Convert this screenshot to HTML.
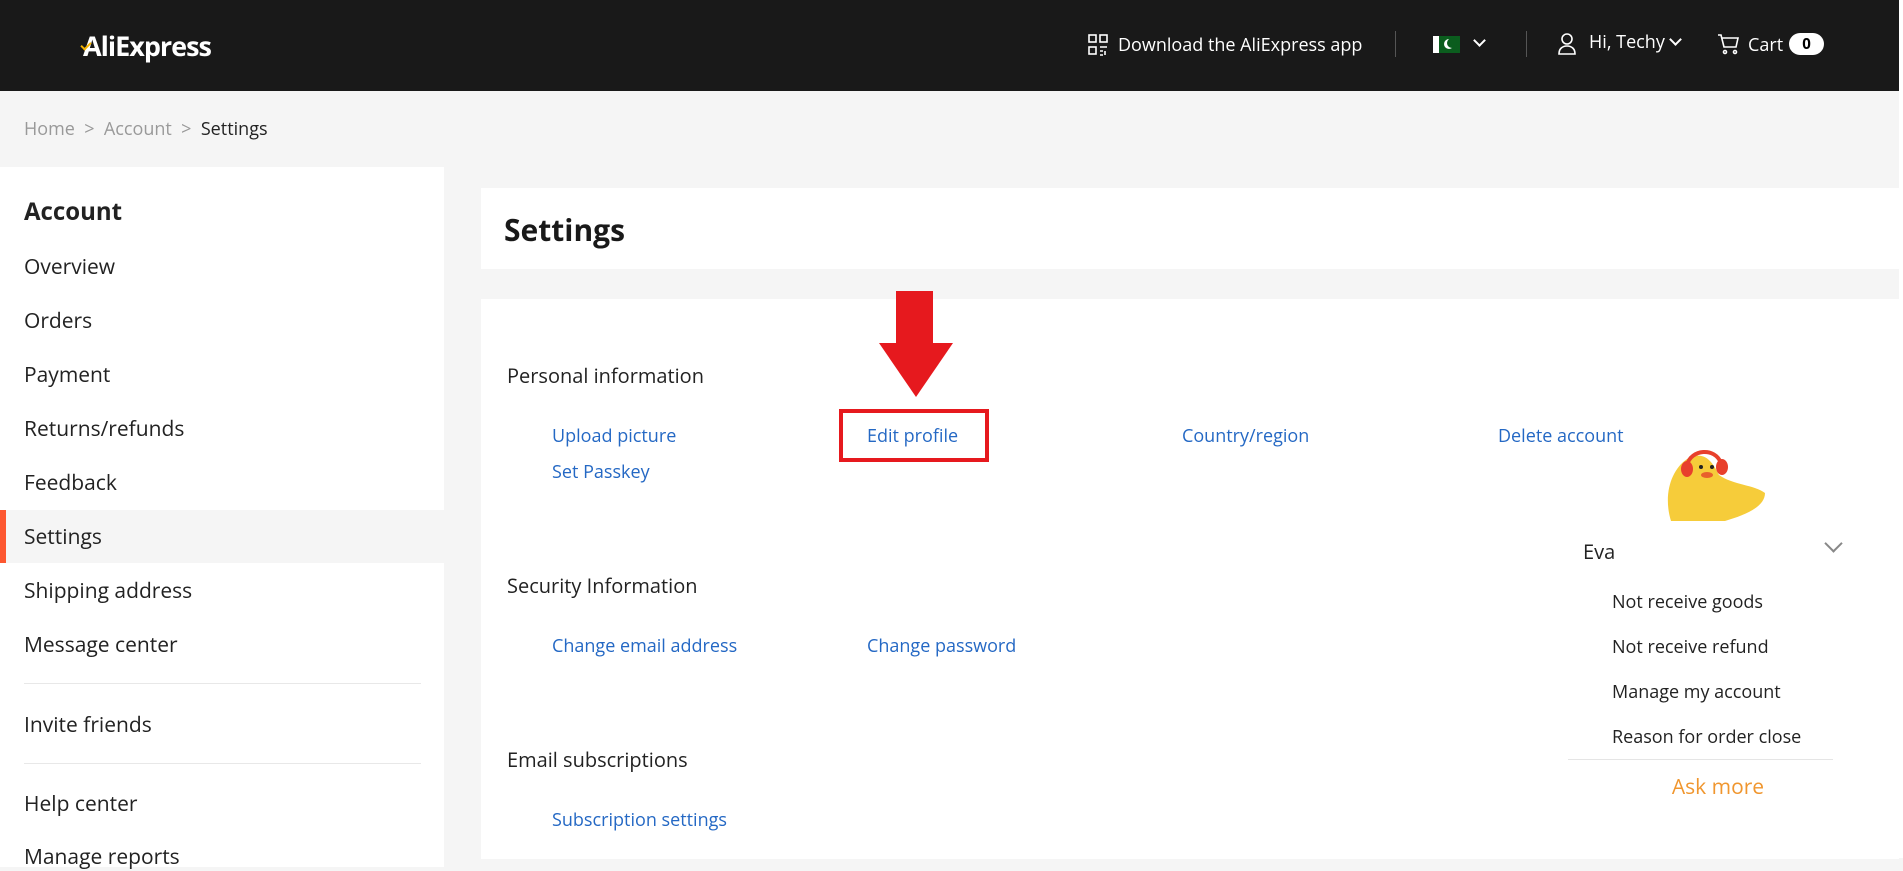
<!DOCTYPE html>
<html><head><meta charset="utf-8"><style>
*{margin:0;padding:0;box-sizing:border-box}
body{width:1903px;height:858px;overflow:hidden;background:#f5f5f5;font-family:"Open Sans","Liberation Sans",sans-serif;color:#222;position:relative}
.a{position:absolute;white-space:nowrap}
.hdr{position:absolute;left:0;top:0;width:1899px;height:91px;background:#191919;color:#fff}
.side{position:absolute;left:0;top:167px;width:444px;height:700px;background:#fff}
.si{position:absolute;left:24px;font-size:21px;color:#222;line-height:28px}
.lk{position:absolute;font-size:18px;color:#2468c4;line-height:24px;white-space:nowrap}
.sec{position:absolute;left:507px;font-size:20px;color:#222;line-height:26px;white-space:nowrap}
.ev{position:absolute;left:1612px;font-size:18px;color:#222;line-height:24px;white-space:nowrap}
</style></head><body>
<div class="hdr">
 <div class="a" style="left:83px;top:27px;font-size:27px;letter-spacing:-1px;font-weight:bold;color:#fff">AliExpress</div>
 <div class="a" style="left:81px;top:42px;width:10px;height:6px;border-left:2px solid #f5b301;border-bottom:2px solid #f5b301;transform:rotate(-45deg)"></div>
 <svg class="a" style="left:1088px;top:34px" width="20" height="22" viewBox="0 0 20 22" fill="none" stroke="#fff" stroke-width="1.6"><rect x="1" y="1" width="7" height="7"/><rect x="12" y="1" width="7" height="7"/><rect x="1" y="13" width="7" height="7"/><path d="M12 13h7M12 17h3M17 17v4M12 21h3"/></svg>
 <div class="a" style="left:1118px;top:33px;font-size:18px">Download the AliExpress app</div>
 <div class="a" style="left:1395px;top:31px;width:1px;height:26px;background:#555"></div>
 <div class="a" style="left:1433px;top:36px;width:6px;height:17px;background:#fff"></div>
 <div class="a" style="left:1439px;top:36px;width:21px;height:17px;background:#0b5d1e"></div>
 <div class="a" style="left:1444px;top:39px;width:10px;height:10px;border-radius:50%;background:#fff"></div>
 <div class="a" style="left:1447px;top:38px;width:10px;height:10px;border-radius:50%;background:#0b5d1e"></div>
 <div class="a" style="left:1475px;top:36px;width:9px;height:9px;border-right:2px solid #fff;border-bottom:2px solid #fff;transform:rotate(45deg)"></div>
 <div class="a" style="left:1526px;top:31px;width:1px;height:26px;background:#555"></div>
 <svg class="a" style="left:1558px;top:33px" width="18" height="22" viewBox="0 0 18 22" fill="none" stroke="#fff" stroke-width="1.6"><circle cx="9" cy="6" r="5"/><path d="M1 21c0-5 3-8 8-8s8 3 8 8z"/></svg>
 <div class="a" style="left:1589px;top:30px;font-size:18px">Hi, Techy</div>
 <div class="a" style="left:1671px;top:35px;width:9px;height:9px;border-right:2px solid #fff;border-bottom:2px solid #fff;transform:rotate(45deg)"></div>
 <svg class="a" style="left:1717px;top:33px" width="22" height="22" viewBox="0 0 22 22" fill="none" stroke="#fff" stroke-width="1.6"><path d="M1 2h3l3 12h12l2-9H5"/><circle cx="8" cy="19" r="1.5"/><circle cx="18" cy="19" r="1.5"/></svg>
 <div class="a" style="left:1748px;top:33px;font-size:18px">Cart</div>
 <div class="a" style="left:1789px;top:33px;width:35px;height:22px;border-radius:11px;background:#fff;color:#000;font-size:15px;font-weight:bold;text-align:center;line-height:22px">0</div>
</div>
<div class="a" style="left:1899px;top:0;width:4px;height:858px;background:#fff"></div>
<div class="a" style="left:24px;top:117px;font-size:18px;color:#999">Home &nbsp;&gt;&nbsp; Account &nbsp;&gt;&nbsp; <span style="color:#222">Settings</span></div>
<div class="side">
 <div class="si" style="top:31px;font-weight:bold;font-size:24px">Account</div>
 <div class="si" style="top:86px">Overview</div>
 <div class="si" style="top:140px">Orders</div>
 <div class="si" style="top:194px">Payment</div>
 <div class="si" style="top:248px">Returns/refunds</div>
 <div class="si" style="top:302px">Feedback</div>
 <div class="a" style="left:0;top:343px;width:444px;height:53px;background:#f5f5f5"></div>
 <div class="a" style="left:0;top:343px;width:6px;height:53px;background:#fd5730"></div>
 <div class="si" style="top:356px">Settings</div>
 <div class="si" style="top:410px">Shipping address</div>
 <div class="si" style="top:464px">Message center</div>
 <div class="a" style="left:24px;top:516px;width:397px;height:1px;background:#e8e8e8"></div>
 <div class="si" style="top:544px">Invite friends</div>
 <div class="a" style="left:24px;top:596px;width:397px;height:1px;background:#e8e8e8"></div>
 <div class="si" style="top:623px">Help center</div>
 <div class="si" style="top:676px">Manage reports</div>
</div>
<div class="a" style="left:481px;top:188px;width:1418px;height:81px;background:#fff"></div>
<div class="a" style="left:504px;top:209px;font-size:30px;font-weight:bold;color:#191919">Settings</div>
<div class="a" style="left:481px;top:299px;width:1418px;height:560px;background:#fff"></div>
<div class="sec" style="top:363px">Personal information</div>
<div class="lk" style="left:552px;top:424px">Upload picture</div>
<div class="lk" style="left:867px;top:424px">Edit profile</div>
<div class="lk" style="left:1182px;top:424px">Country/region</div>
<div class="lk" style="left:1498px;top:424px">Delete account</div>
<div class="lk" style="left:552px;top:460px">Set Passkey</div>
<div class="a" style="left:839px;top:409px;width:150px;height:53px;border:4px solid #e6191e"></div>
<div class="a" style="left:896px;top:291px;width:37px;height:53px;background:#e6191e"></div>
<div class="a" style="left:879px;top:343px;width:0;height:0;border-left:37px solid transparent;border-right:37px solid transparent;border-top:54px solid #e6191e"></div>
<div class="sec" style="top:573px">Security Information</div>
<div class="lk" style="left:552px;top:634px">Change email address</div>
<div class="lk" style="left:867px;top:634px">Change password</div>
<div class="sec" style="top:747px">Email subscriptions</div>
<div class="lk" style="left:552px;top:808px">Subscription settings</div>
<svg class="a" style="left:1665px;top:445px" width="104" height="76" viewBox="0 0 104 76"><path d="M6 76C-2 50 6 25 22 14 40 4 48 18 54 30 68 40 90 40 100 48 100 62 80 70 60 76z" fill="#f6cc3a"/><path d="M22 20C26 4 50 2 56 18" fill="none" stroke="#e8402c" stroke-width="4"/><ellipse cx="22" cy="24" rx="6" ry="8" fill="#e8402c"/><ellipse cx="57" cy="22" rx="6" ry="8" fill="#e8402c"/><circle cx="36" cy="22" r="2" fill="#222"/><circle cx="47" cy="22" r="2" fill="#222"/><ellipse cx="42" cy="30" rx="6" ry="3" fill="#e8602c"/></svg>
<div class="a" style="left:1583px;top:538px;font-size:20px;color:#222">Eva</div>
<div class="a" style="left:1827px;top:537px;width:13px;height:13px;border-right:2px solid #888;border-bottom:2px solid #888;transform:rotate(45deg)"></div>
<div class="ev" style="top:590px">Not receive goods</div>
<div class="ev" style="top:635px">Not receive refund</div>
<div class="ev" style="top:680px">Manage my account</div>
<div class="ev" style="top:725px">Reason for order close</div>
<div class="a" style="left:1568px;top:759px;width:265px;height:1px;background:#e5e5e5"></div>
<div class="a" style="left:1568px;top:773px;width:300px;text-align:center;font-size:21px;color:#f0962e">Ask more</div>
</body></html>
